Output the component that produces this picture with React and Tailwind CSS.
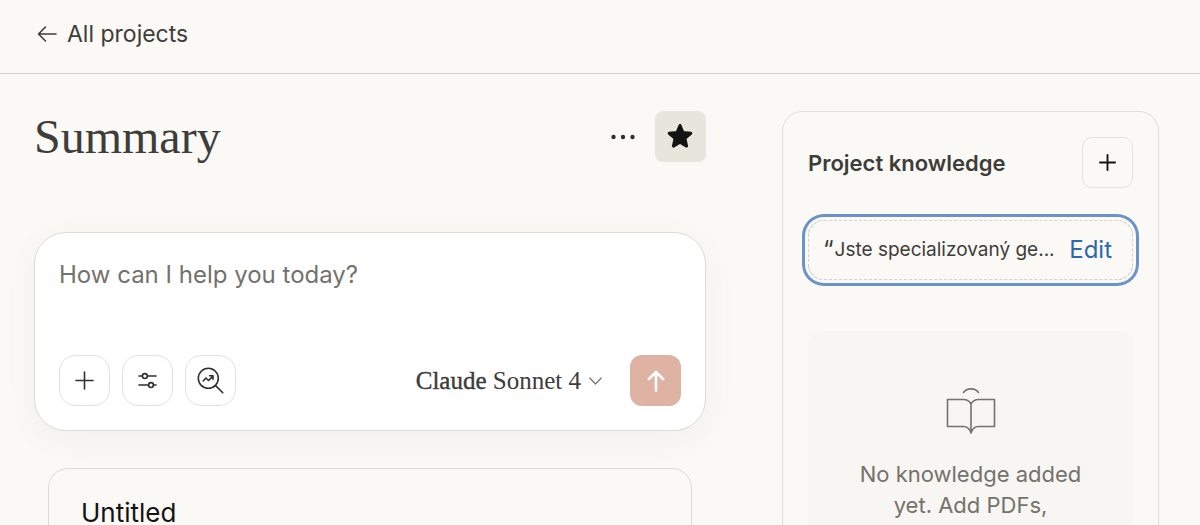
import React from "react";

const stroke = {
  fill: "none",
  stroke: "currentColor",
  strokeLinecap: "round",
  strokeLinejoin: "round",
};

function ToolButton({ label, className = "", children }) {
  return (
    <button
      type="button"
      aria-label={label}
      className={`flex size-[51px] shrink-0 items-center justify-center border border-[#e3e2dd] ${className}`}
    >
      {children}
    </button>
  );
}

function TopBar() {
  return (
    <header className="flex h-[74px] items-center border-b border-[#d3d2ce] px-[37px] pb-1.5">
      <a href="#projects" className="flex items-center gap-2.5 text-[23px] leading-7 text-[#3d3d3a]">
        <svg width="20" height="16" viewBox="0 0 20 16" strokeWidth="1.6" {...stroke}>
          <path d="M19 8H1.500M8.500 1 1.500 8l7 7" />
        </svg>
        All projects
      </a>
    </header>
  );
}

function Composer() {
  return (
    <form className="mt-[70px] rounded-[32px] border border-[#dcdbd7] bg-white p-6 shadow-[0_8px_36px_rgba(0,0,0,0.045)]">
      <textarea
        aria-label="Message"
        placeholder="How can I help you today?"
        className="block h-[98px] w-full resize-none bg-transparent text-2xl leading-9 outline-none placeholder:text-[#73726c]"
      />
      <div className="flex items-center gap-3 text-[#30302e]">
        <ToolButton label="Add content" className="rounded-2xl">
          <svg width="19" height="19" viewBox="0 0 20 20" strokeWidth="1.7" {...stroke}>
            <path d="M10 1v18M1 10h18" />
          </svg>
        </ToolButton>
        <ToolButton label="Tools" className="rounded-2xl">
          <svg width="19" height="17" viewBox="0 0 20 18" strokeWidth="1.7" {...stroke}>
            <path d="M1 4.3h3.6M9.9 4.3H19M1 13.8h10.1M16.4 13.8H19" />
            <circle cx="7.2" cy="4.3" r="2.6" />
            <circle cx="13.7" cy="13.8" r="2.6" />
          </svg>
        </ToolButton>
        <ToolButton label="Research" className="rounded-2xl">
          <svg width="27" height="27" viewBox="0 0 27 27" strokeWidth="1.6" {...stroke}>
            <circle cx="11.3" cy="11.3" r="10" />
            <path d="m18.6 18.6 7.2 7.2M6.2 14l2.7-3 2.6 2.5 4.5-4.4M12.6 8.8H16v3.4" />
          </svg>
        </ToolButton>
        <button
          type="button"
          className="ml-auto flex items-center gap-2 font-['Liberation_Serif',serif] text-[25px] leading-8 text-[#3d3d3a]"
        >
          <span>
            <span className="[-webkit-text-stroke:0.4px_currentColor]">Claude</span> Sonnet 4
          </span>
          <svg width="13" height="8" viewBox="0 0 13 8" strokeWidth="1.2" className="text-[#73726c]" {...stroke}>
            <path d="m.8 1 5.7 6 5.7-6" />
          </svg>
        </button>
        <button
          type="submit"
          aria-label="Send message"
          className="ml-4 flex size-[51px] items-center justify-center rounded-xl bg-[#deb3a4] text-white"
        >
          <svg width="18" height="22" viewBox="0 0 18 22" strokeWidth="2.6" {...stroke}>
            <path d="M9 20.5V2M1.8 9.2 9 2l7.2 7.2" />
          </svg>
        </button>
      </div>
    </form>
  );
}

function ProjectColumn() {
  return (
    <section>
      <div className="flex items-center">
        <h1 className="font-['Liberation_Serif',serif] text-[48px] leading-[51px] text-[#3d3d3a]">Summary</h1>
        <button type="button" aria-label="More options" className="ml-auto flex h-[51px] w-16 items-center justify-center text-[#30302e]">
          <svg width="24" height="6" viewBox="0 0 24 6" fill="currentColor">
            <circle cx="2.5" cy="3" r="2.2" />
            <circle cx="12" cy="3" r="2.2" />
            <circle cx="21.5" cy="3" r="2.2" />
          </svg>
        </button>
        <button type="button" aria-label="Starred" className="flex size-[51px] items-center justify-center rounded-lg bg-[#e8e6dc] text-[#141413]">
          <svg width="27" height="27" viewBox="0 0 27 27" fill="currentColor" stroke="currentColor" strokeWidth="3" strokeLinejoin="round">
            <path d="m13 2.500 3 7 7.800.8-5.900 5.100 1.700 7.700L13 19.200l-6.600 3.900 1.700-7.700-5.900-5.100 7.800-.8Z" />
          </svg>
        </button>
      </div>
      <Composer />
      <a href="#untitled" className="mx-3.5 mt-[37px] block rounded-[20px] border border-[#dcdbd5] px-8 pt-7 pb-8 text-[26px] leading-8 text-[#141413]">
        Untitled
      </a>
    </section>
  );
}

function KnowledgePanel() {
  return (
    <aside className="rounded-[20px] border border-[#e0dfda] px-[25px] py-[25px]">
      <div className="flex items-center justify-between">
        <h2 className="text-[22px] leading-8 font-semibold text-[#3d3d3a]">Project knowledge</h2>
        <ToolButton label="Add knowledge" className="rounded-[10px] text-[#141413]">
          <svg width="17" height="17" viewBox="0 0 18 18" strokeWidth="2" {...stroke}>
            <path d="M9 1v16M1 9h16" />
          </svg>
        </ToolButton>
      </div>
      <div className="mt-8 flex h-[60px] items-center justify-between rounded-2xl border border-dashed border-[#d3d2cc] pr-5 pl-3.5 ring-3 ring-[#6c93c7] ring-offset-3 ring-offset-[#faf9f5]">
        <p className="flex items-center gap-px whitespace-nowrap text-[#3d3d3a]">
          <span className="text-2xl leading-7">“</span>
          <span className="text-[19px] leading-7">Jste specializovaný ge...</span>
        </p>
        <button type="button" className="text-2xl leading-7 text-[#2c67b0]">Edit</button>
      </div>
      <div className="mt-[51px] rounded-xl bg-[#f7f6f2] px-12 pt-[56px] pb-16 text-center text-[22px] leading-[31px] text-[#73726c]">
        <svg width="50" height="48" viewBox="0 0 50 48" strokeWidth="1.6" className="mx-auto mb-6" {...stroke}>
          <path d="M17.5 5.5C21 .7 29 .7 32.5 5.5M25 17c-1.6-3-4-4.5-7.500-4.500H1.500v27h16c3.500 0 6 1.700 7.500 6.500 1.500-4.800 4-6.500 7.500-6.500h16v-27h-16C29 12.500 26.600 14 25 17v29" />
        </svg>
        <p>No knowledge added yet. Add PDFs, documents, or other text</p>
      </div>
    </aside>
  );
}

export default function App() {
  return (
    <div className="h-screen overflow-hidden bg-[#faf9f5] font-[Inter,sans-serif]">
      <TopBar />
      <main className="grid grid-cols-[minmax(0,1fr)_377px] items-start gap-[76px] pt-[37px] pr-[41px] pl-[34px]">
        <ProjectColumn />
        <KnowledgePanel />
      </main>
    </div>
  );
}
